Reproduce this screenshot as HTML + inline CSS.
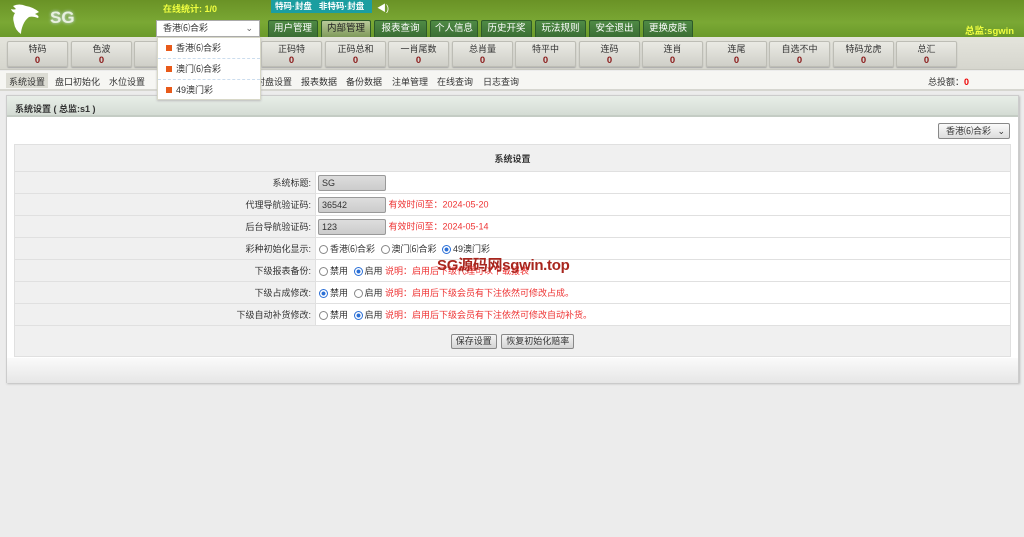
<!DOCTYPE html>
<html><head><meta charset="utf-8"><style>
*{margin:0;padding:0;box-sizing:border-box}
body{width:1024px;height:537px;overflow:hidden;background:#ececec;font-family:"Liberation Sans","Noto Sans CJK SC",sans-serif;font-size:9px;color:#333;position:relative}
.a{position:absolute}
#hd{left:0;top:0;width:1024px;height:37px;background:linear-gradient(#6a9226,#7aa834 60%,#6b9a2a)}
.tab{position:absolute;top:20px;height:17px;background:linear-gradient(#4f8a45,#3b6e35);border:1px solid #2d5a2a;border-bottom:none;color:#fff;font-size:9.5px;text-align:center;line-height:16px;border-radius:2px 2px 0 0}
.tab.on{background:linear-gradient(#b9c99a,#7f9a5a);color:#222}
#st{left:0;top:37px;width:1024px;height:33px;background:linear-gradient(#e4e4dc,#d6d6ce);border-bottom:1px solid #c8c8c0}
.sb{position:absolute;top:4px;width:61px;height:26px;background:linear-gradient(#eaeae4,#cfcfc8);border:1px solid #bdbdb5;border-radius:2px;text-align:center;font-size:9px;line-height:11px;padding-top:2px;box-shadow:0 1px 1px #aaa}
.sb b{color:#8b1a1a;display:block;font-size:9.5px}
#sub{left:0;top:71px;width:1024px;height:20px;background:#f6f6f3;border-bottom:2px solid #d6d6d0}
.sm{position:absolute;top:4px;font-size:9px;color:#333}
#pn{left:6px;top:95px;width:1013px;height:288px;background:#fff;border:1px solid #ccc;box-shadow:1px 1px 2px #bbb}
#ph{left:0;top:0;width:1011px;height:21px;background:linear-gradient(#e8eee8,#d4dcd4);border-bottom:2px solid #c4ccc4;font-size:9px;padding:6px 0 0 8px;font-weight:bold;color:#333}
#pf{left:0;top:262px;width:1011px;height:25px;background:linear-gradient(#fafafa,#e6e6e6)}
table{position:absolute;left:7px;top:48px;width:997px;border-collapse:collapse}
td{border:1px solid #e0e0e0;height:22px;font-size:9px;white-space:nowrap}
td.l{width:301px;text-align:right;padding-right:4px;background:#f0f0f0}
.inp{display:inline-block;width:68px;height:16px;border:1px solid #999;border-radius:2px;background:linear-gradient(#ddd,#ccc);vertical-align:middle;padding-left:3px;line-height:14px;font-size:9px;margin-left:2px}
.red{color:#e33;font-size:9px}
.r{display:inline-block;width:9px;height:9px;border:1px solid #888;border-radius:50%;vertical-align:middle;margin:0 2px 0 3px;background:#fff}
.r.on{border-color:#2a6fd6;background:radial-gradient(#2a6fd6 35%,#fff 45%)}
.btn{display:inline-block;height:15px;border:1px solid #888;background:linear-gradient(#f4f4f4,#d4d4d4);font-size:9px;line-height:13px;padding:0 4px;border-radius:2px;margin:0 1px}
</style></head><body>
<div id="hd" class="a">
<svg class="a" style="left:9px;top:3px" width="34" height="32" viewBox="0 0 34 32"><path d="M4 3 Q10 0 17 3 Q24 4 30 9 L26 11 Q31 13 29 15 Q24 13 20 14 Q16 17 14 22 Q12 27 12 31 Q6 27 5 20 Q3 14 6 10 Q3 9 2 6 Q5 7 7 6 Z" fill="#fff"/></svg>
<div class="a" style="left:50px;top:8px;color:#e8f0e0;font-size:17px;font-weight:bold;text-shadow:0 0 3px #cde">SG</div>
<div class="a" style="left:163px;top:2px;color:#f0ff40;font-size:9px;font-weight:bold">在线统计: 1/0</div>
<div class="a" style="left:271px;top:0;width:101px;height:13px;background:#1b9ea0;color:#fff;font-size:8.5px;font-weight:bold;line-height:12px;padding-left:4px;white-space:nowrap;overflow:hidden">特码·封盘&nbsp;&nbsp;&nbsp;非特码·封盘</div>
<div class="a" style="left:377px;top:1px;color:#fff;font-size:9px">◀)</div>
<div class="a" style="left:156px;top:20px;width:104px;height:17px;background:#fff;border:1px solid #aaa;font-size:9px;line-height:15px;padding-left:6px">香港⑹合彩<span style="position:absolute;right:6px;color:#666">⌄</span></div>
<div class="tab" style="left:268px;width:50px">用户管理</div>
<div class="tab on" style="left:321px;width:50px">内部管理</div>
<div class="tab" style="left:374px;width:53px">报表查询</div>
<div class="tab" style="left:430px;width:48px">个人信息</div>
<div class="tab" style="left:481px;width:51px">历史开奖</div>
<div class="tab" style="left:535px;width:51px">玩法规则</div>
<div class="tab" style="left:589px;width:51px">安全退出</div>
<div class="tab" style="left:643px;width:50px">更换皮肤</div>
<div class="a" style="left:965px;top:23px;color:#f0ff40;font-size:9.5px;font-weight:bold">总监:sgwin</div>
</div>
<div id="st" class="a">
<div class="sb" style="left:7px">特码<b>0</b></div>
<div class="sb" style="left:71px">色波<b>0</b></div>
<div class="sb" style="left:134px">&nbsp;<b>0</b></div>
<div class="sb" style="left:198px">&nbsp;<b>0</b></div>
<div class="sb" style="left:261px">正码特<b>0</b></div>
<div class="sb" style="left:325px">正码总和<b>0</b></div>
<div class="sb" style="left:388px">一肖尾数<b>0</b></div>
<div class="sb" style="left:452px">总肖量<b>0</b></div>
<div class="sb" style="left:515px">特平中<b>0</b></div>
<div class="sb" style="left:579px">连码<b>0</b></div>
<div class="sb" style="left:642px">连肖<b>0</b></div>
<div class="sb" style="left:706px">连尾<b>0</b></div>
<div class="sb" style="left:769px">自选不中<b>0</b></div>
<div class="sb" style="left:833px">特码龙虎<b>0</b></div>
<div class="sb" style="left:896px">总汇<b>0</b></div>
</div>
<div id="sub" class="a">
<div class="a" style="left:6px;top:2px;width:42px;height:15px;background:#dcdcd4"></div>
<span class="sm" style="left:9px">系统设置</span>
<span class="sm" style="left:55px">盘口初始化</span>
<span class="sm" style="left:109px">水位设置</span>
<span class="sm" style="left:256px">封盘设置</span>
<span class="sm" style="left:301px">报表数据</span>
<span class="sm" style="left:346px">备份数据</span>
<span class="sm" style="left:392px">注单管理</span>
<span class="sm" style="left:437px">在线查询</span>
<span class="sm" style="left:483px">日志查询</span>
<span class="sm" style="left:928px">总投额：<b style="color:#e00">0</b></span>
</div>
<div id="pn" class="a">
<div id="ph" class="a">系统设置 ( 总监:s1 )</div>
<div class="a" style="left:931px;top:27px;width:72px;height:16px;border:1px solid #888;border-radius:2px;background:linear-gradient(#fafafa,#ddd);font-size:9px;line-height:14px;padding-left:7px">香港⑹合彩 <span style="position:absolute;right:4px">⌄</span></div>
<table>
<tr><td colspan="2" style="height:27px;background:#f0f0f0;text-align:center;font-weight:bold">系统设置</td></tr>
<tr><td class="l">系统标题:</td><td><span class="inp">SG</span></td></tr>
<tr><td class="l">代理导航验证码:</td><td><span class="inp">36542</span> <span class="red">有效时间至：2024-05-20</span></td></tr>
<tr><td class="l">后台导航验证码:</td><td><span class="inp">123</span> <span class="red">有效时间至：2024-05-14</span></td></tr>
<tr><td class="l">彩种初始化显示:</td><td><span class="r"></span>香港⑹合彩 <span class="r"></span>澳门⑹合彩 <span class="r on"></span>49澳门彩</td></tr>
<tr><td class="l">下级报表备份:</td><td><span class="r"></span>禁用 <span class="r on"></span>启用 <span class="red">说明：启用后下级代理可以下载报表</span></td></tr>
<tr><td class="l">下级占成修改:</td><td><span class="r on"></span>禁用 <span class="r"></span>启用 <span class="red">说明：启用后下级会员有下注依然可修改占成。</span></td></tr>
<tr><td class="l">下级自动补货修改:</td><td><span class="r"></span>禁用 <span class="r on"></span>启用 <span class="red">说明：启用后下级会员有下注依然可修改自动补货。</span></td></tr>
<tr><td colspan="2" style="height:31px;background:#f0f0f0;text-align:center"><span class="btn">保存设置</span> <span class="btn">恢复初始化赔率</span></td></tr>
</table>
<div id="pf" class="a"></div>
</div>
<div class="a" style="left:437px;top:254px;color:#a8261e;font-size:15px;font-weight:bold;letter-spacing:-0.3px">SG源码网sgwin.top</div>
<div class="a" style="left:157px;top:37px;width:104px;height:63px;background:#fff;border:1px solid #d8d8c8;box-shadow:0 1px 2px #bbb;font-size:9px">
<div style="height:21px;line-height:20px;padding-left:8px;border-bottom:1px dashed #cde"><span style="display:inline-block;width:6px;height:6px;background:#e85a1a;margin-right:4px"></span>香港⑹合彩</div>
<div style="height:21px;line-height:20px;padding-left:8px;border-bottom:1px dashed #cde"><span style="display:inline-block;width:6px;height:6px;background:#e85a1a;margin-right:4px"></span>澳门⑹合彩</div>
<div style="height:21px;line-height:20px;padding-left:8px"><span style="display:inline-block;width:6px;height:6px;background:#e85a1a;margin-right:4px"></span>49澳门彩</div>
</div>
</body></html>
